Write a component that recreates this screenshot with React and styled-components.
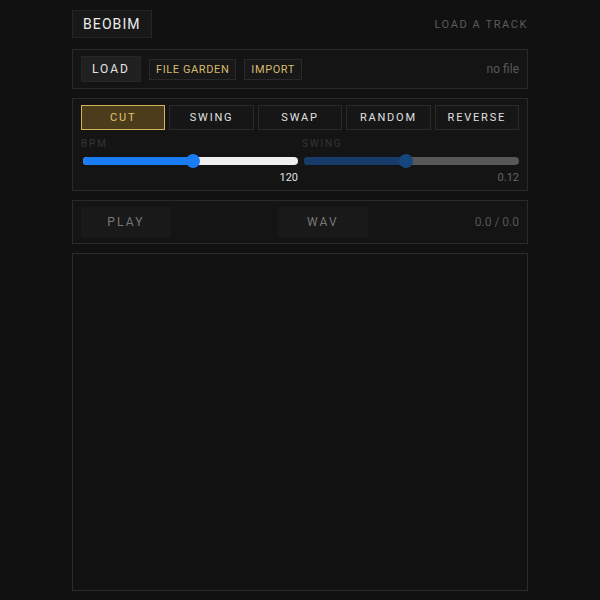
import React from 'react'
import styled, { createGlobalStyle } from 'styled-components'

const GlobalStyle = createGlobalStyle`
    html, body {
        margin: 0;
        padding: 0;
        background: #111111;
    }
    body {
        font-family: Roboto, "Liberation Sans", sans-serif;
        color: #ddd;
    }
`

const MODES = ['CUT', 'SWING', 'SWAP', 'RANDOM', 'REVERSE']

const Slider = ({ label, value, display, min, max, dim }) => {
    const pct = ((value - min) / (max - min)) * 100
    return (
        <SliderBlock>
            <SliderLabel>{label}</SliderLabel>
            <Track $dim={dim}>
                <Fill $dim={dim} style={{ width: `${pct}%` }} />
                <Thumb $dim={dim} style={{ left: `${pct}%` }} />
            </Track>
            <SliderValue $dim={dim}>{display}</SliderValue>
        </SliderBlock>
    )
}

const App = () => {
    return (
        <>
            <GlobalStyle />
            <Page>
                <Header>
                    <Brand>BEOBIM</Brand>
                    <Hint>LOAD A TRACK</Hint>
                </Header>

                <Panel>
                    <Row>
                        <LoadButton>LOAD</LoadButton>
                        <GoldButton>FILE GARDEN</GoldButton>
                        <GoldButton>IMPORT</GoldButton>
                        <FileName>no file</FileName>
                    </Row>
                </Panel>

                <Panel>
                    <Modes>
                        {MODES.map((m, i) => (
                            <ModeButton key={m} $active={i === 0}>
                                {m}
                            </ModeButton>
                        ))}
                    </Modes>
                    <Sliders>
                        <Slider label="BPM" value={120} display="120" min={40} max={197} />
                        <Slider label="SWING" value={0.12} display="0.12" min={0} max={0.253} dim />
                    </Sliders>
                </Panel>

                <Panel>
                    <Transport>
                        <TransportButton>PLAY</TransportButton>
                        <TransportButton>WAV</TransportButton>
                        <Time>0.0 / 0.0</Time>
                    </Transport>
                </Panel>

                <Canvas />
            </Page>
        </>
    )
}

const Page = styled.div`
    width: 456px;
    margin: 0 auto;
    padding: 10px 0;
    display: flex;
    flex-direction: column;
    gap: 9px;
`

const Header = styled.div`
    display: flex;
    align-items: center;
    justify-content: space-between;
    margin-bottom: 2px;
`

const Brand = styled.div`
    height: 28px;
    box-sizing: border-box;
    padding: 0 10px;
    display: flex;
    align-items: center;
    background: #181818;
    border: 1px solid #252525;
    font-size: 14px;
    letter-spacing: 1.1px;
    color: #ececec;
`

const Hint = styled.div`
    font-size: 11px;
    letter-spacing: 1.6px;
    color: #5c5c5c;
`

const Panel = styled.div`
    border: 1px solid #2a2a2a;
    padding: 6px 8px;
    background: #141414;
`

const Row = styled.div`
    display: flex;
    align-items: center;
    gap: 8px;
    height: 26px;
`

const LoadButton = styled.div`
    width: 60px;
    height: 26px;
    display: flex;
    align-items: center;
    justify-content: center;
    background: #202020;
    border: 1px solid #262626;
    box-sizing: border-box;
    font-size: 12px;
    letter-spacing: 2px;
    color: #e4e4e4;
`

const GoldButton = styled.div`
    height: 21px;
    padding: 0 6px;
    display: flex;
    align-items: center;
    background: #181818;
    border: 1px solid #2a2a2a;
    box-sizing: border-box;
    font-size: 11px;
    letter-spacing: 0.6px;
    color: #d6bb6e;
`

const FileName = styled.div`
    margin-left: auto;
    font-size: 12px;
    color: #585858;
`

const Modes = styled.div`
    display: grid;
    grid-template-columns: repeat(5, 1fr);
    gap: 4px;
`

const ModeButton = styled.div`
    height: 25px;
    display: flex;
    align-items: center;
    justify-content: center;
    box-sizing: border-box;
    font-size: 11px;
    letter-spacing: 1.8px;
    background: ${({ $active }) => ($active ? '#4b3d1c' : '#161616')};
    border: 1px solid ${({ $active }) => ($active ? '#d4b458' : '#2a2a2a')};
    color: ${({ $active }) => ($active ? '#e4c56a' : '#e0e0e0')};
`

const Sliders = styled.div`
    display: grid;
    grid-template-columns: 1fr 1fr;
    gap: 4px;
    margin-top: 8px;
`

const SliderBlock = styled.div`
    display: flex;
    flex-direction: column;
`

const SliderLabel = styled.div`
    font-size: 10px;
    letter-spacing: 1.8px;
    color: #353535;
    height: 12px;
    line-height: 12px;
`

const Track = styled.div`
    position: relative;
    margin: 7px 0 0 2px;
    height: 8px;
    border-radius: 4px;
    background: ${({ $dim }) => ($dim ? '#575757' : '#efefef')};
`

const Fill = styled.div`
    height: 100%;
    border-radius: 4px;
    background: ${({ $dim }) => ($dim ? '#173c6b' : '#1a7cf2')};
`

const Thumb = styled.div`
    position: absolute;
    top: 50%;
    width: 14px;
    height: 14px;
    border-radius: 50%;
    transform: translate(-50%, -50%);
    background: ${({ $dim }) => ($dim ? '#17467e' : '#1a7cf2')};
`

const SliderValue = styled.div`
    margin-top: 6px;
    text-align: right;
    font-size: 11px;
    color: ${({ $dim }) => ($dim ? '#666' : '#e0e0e0')};
`

const Transport = styled.div`
    display: flex;
    align-items: center;
    justify-content: space-between;
    height: 30px;
`

const TransportButton = styled.div`
    width: 90px;
    height: 30px;
    display: flex;
    align-items: center;
    justify-content: center;
    background: #191919;
    font-size: 12px;
    letter-spacing: 2.2px;
    color: #777;
`

const Time = styled.div`
    font-size: 12px;
    color: #555;
`

const Canvas = styled.div`
    height: 336px;
    border: 1px solid #2c2c2c;
    background: #121212;
`

export default App
